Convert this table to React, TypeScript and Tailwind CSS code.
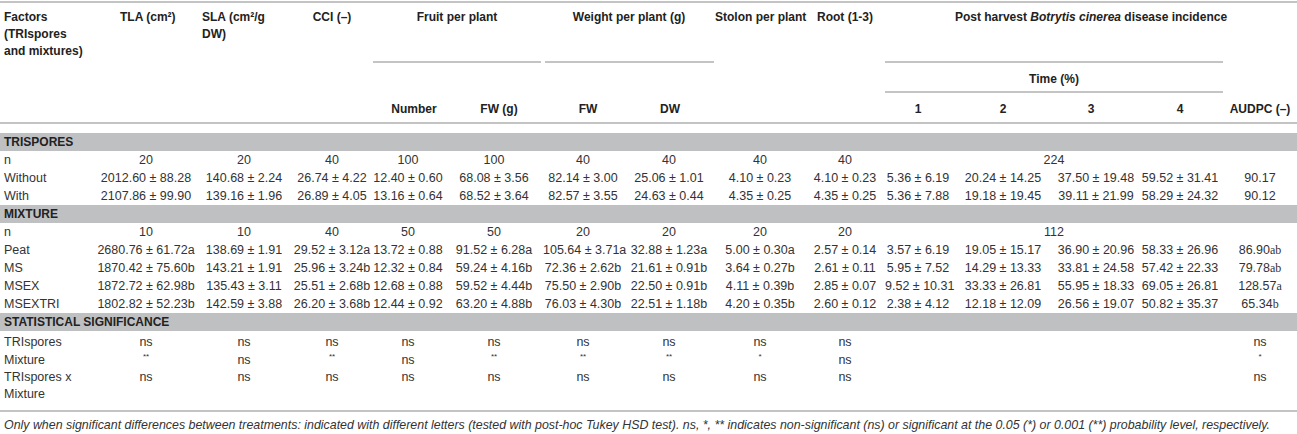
import React from "react";

const GRID =
  "grid grid-cols-[97px_98px_98px_78px_74px_98px_80px_92px_90px_80px_66px_104px_82px_86px_74px]";

function Band({ children }: { children: React.ReactNode }) {
  return (
    <div className="h-[18px] bg-[#bfc0c2] pl-[4px] text-[12px] font-bold leading-[18px] text-[#222]">
      {children}
    </div>
  );
}

function NRow({ vals, time }: { vals: string[]; time: string }) {
  return (
    <div className={`${GRID} h-[18px] leading-[18px]`}>
      <div className="pl-[4px]">n</div>
      {vals.map((v, i) => (
        <div key={i} className="text-center">
          {v}
        </div>
      ))}
      <div className="col-span-4 text-center">{time}</div>
      <div></div>
    </div>
  );
}

function DataRow({
  label,
  cells,
  audpc,
  letters,
}: {
  label: string;
  cells: string[];
  audpc: string;
  letters?: string;
}) {
  return (
    <div className={`${GRID} h-[18px] leading-[18px]`}>
      <div className="pl-[4px]">{label}</div>
      {cells.map((c, i) => (
        <div key={i} className="whitespace-nowrap text-center">
          {c}
        </div>
      ))}
      <div className="whitespace-nowrap text-center">
        {audpc}
        {letters ? <span className="font-['Liberation_Serif',serif] text-[12px]">{letters}</span> : null}
      </div>
    </div>
  );
}

function Star({ n }: { n: number }) {
  return <span className="align-super text-[8px] leading-none">{n === 2 ? "**" : "*"}</span>;
}

function StatRow({
  label,
  cells,
  audpc,
  tall,
}: {
  label: React.ReactNode;
  cells: React.ReactNode[];
  audpc: React.ReactNode;
  tall?: boolean;
}) {
  return (
    <div className={`${GRID} ${tall ? "h-[34px] leading-[17px]" : "h-[18px] leading-[18px]"}`}>
      <div className="pl-[4px]">{label}</div>
      {cells.map((c, i) => (
        <div key={i} className="text-center">
          {c}
        </div>
      ))}
      <div className="col-span-4"></div>
      <div className="text-center">{audpc}</div>
    </div>
  );
}

export default function App() {
  const ns9 = Array.from({ length: 9 }, () => "ns");
  return (
    <div className="w-[1297px] bg-white pt-[1px] font-['Liberation_Sans',Arial,sans-serif] text-[12.5px] text-[#333]">
      <div className="h-[2px] bg-[#c4c4c4]"></div>

      {/* header */}
      <div className={`${GRID} grid-rows-[58px_32px_29px] text-[12px] font-bold leading-[17px] text-[#222]`}>
        <div className="col-start-1 row-start-1 row-span-3 pl-[4px] pt-[6px]">
          Factors
          <br />
          (TRIspores
          <br />
          and mixtures)
        </div>
        <div className="col-start-2 row-start-1 row-span-3 pl-[23px] pt-[6px]">TLA (cm²)</div>
        <div className="col-start-3 row-start-1 row-span-3 pl-[7px] pt-[6px]">
          SLA (cm²/g
          <br />
          DW)
        </div>
        <div className="col-start-4 row-start-1 row-span-3 pt-[6px] text-center">CCI (–)</div>
        <div className="col-start-5 col-span-2 row-start-1 pt-[6px] text-center">Fruit per plant</div>
        <div className="col-start-7 col-span-2 row-start-1 pt-[6px] text-center">Weight per plant (g)</div>
        <div className="col-start-9 row-start-1 row-span-3 whitespace-nowrap pt-[6px] text-center">
          Stolon per plant
        </div>
        <div className="col-start-10 row-start-1 row-span-3 pt-[6px] text-center">Root (1-3)</div>
        <div className="col-start-11 col-span-5 row-start-1 pt-[6px] text-center">
          Post harvest <i>Botrytis cinerea</i> disease incidence
        </div>

        <div className="col-start-5 col-span-2 row-start-2 mx-[2px] border-t-2 border-[#c4c4c4]"></div>
        <div className="col-start-7 col-span-2 row-start-2 ml-[2px] mr-[1px] border-t-2 border-[#c4c4c4]"></div>
        <div className="col-start-11 col-span-4 row-start-2 border-y-2 border-[#c4c4c4] pt-[8px] text-center">
          Time (%)
        </div>

        <div className="col-start-5 row-start-3 pl-[12px] pt-[8px] text-center">Number</div>
        <div className="col-start-6 row-start-3 pl-[10px] pt-[8px] text-center">FW (g)</div>
        <div className="col-start-7 row-start-3 pl-[10px] pt-[8px] text-center">FW</div>
        <div className="col-start-8 row-start-3 pl-[2px] pt-[8px] text-center">DW</div>
        <div className="col-start-11 row-start-3 pt-[8px] text-center">1</div>
        <div className="col-start-12 row-start-3 pt-[8px] text-center">2</div>
        <div className="col-start-13 row-start-3 pr-[10px] pt-[8px] text-center">3</div>
        <div className="col-start-14 row-start-3 pt-[8px] text-center">4</div>
        <div className="col-start-15 row-start-3 whitespace-nowrap pt-[8px] text-center">AUDPC (–)</div>
      </div>
      <div className="h-[2px] bg-[#c4c4c4]"></div>

      <div className="mt-[9px]">
        <Band>TRISPORES</Band>
        <NRow vals={["20", "20", "40", "100", "100", "40", "40", "40", "40"]} time="224" />
        <DataRow
          label="Without"
          cells={[
            "2012.60 ± 88.28",
            "140.68 ± 2.24",
            "26.74 ± 4.22",
            "12.40 ± 0.60",
            "68.08 ± 3.56",
            "82.14 ± 3.00",
            "25.06 ± 1.01",
            "4.10 ± 0.23",
            "4.10 ± 0.23",
            "5.36 ± 6.19",
            "20.24 ± 14.25",
            "37.50 ± 19.48",
            "59.52 ± 31.41",
          ]}
          audpc="90.17"
        />
        <DataRow
          label="With"
          cells={[
            "2107.86 ± 99.90",
            "139.16 ± 1.96",
            "26.89 ± 4.05",
            "13.16 ± 0.64",
            "68.52 ± 3.64",
            "82.57 ± 3.55",
            "24.63 ± 0.44",
            "4.35 ± 0.25",
            "4.35 ± 0.25",
            "5.36 ± 7.88",
            "19.18 ± 19.45",
            "39.11 ± 21.99",
            "58.29 ± 24.32",
          ]}
          audpc="90.12"
        />

        <Band>MIXTURE</Band>
        <NRow vals={["10", "10", "40", "50", "50", "20", "20", "20", "20"]} time="112" />
        <DataRow
          label="Peat"
          cells={[
            "2680.76 ± 61.72a",
            "138.69 ± 1.91",
            "29.52 ± 3.12a",
            "13.72 ± 0.88",
            "91.52 ± 6.28a",
            "105.64 ± 3.71a",
            "32.88 ± 1.23a",
            "5.00 ± 0.30a",
            "2.57 ± 0.14",
            "3.57 ± 6.19",
            "19.05 ± 15.17",
            "36.90 ± 20.96",
            "58.33 ± 26.96",
          ]}
          audpc="86.90"
          letters="ab"
        />
        <DataRow
          label="MS"
          cells={[
            "1870.42 ± 75.60b",
            "143.21 ± 1.91",
            "25.96 ± 3.24b",
            "12.32 ± 0.84",
            "59.24 ± 4.16b",
            "72.36 ± 2.62b",
            "21.61 ± 0.91b",
            "3.64 ± 0.27b",
            "2.61 ± 0.11",
            "5.95 ± 7.52",
            "14.29 ± 13.33",
            "33.81 ± 24.58",
            "57.42 ± 22.33",
          ]}
          audpc="79.78"
          letters="ab"
        />
        <DataRow
          label="MSEX"
          cells={[
            "1872.72 ± 62.98b",
            "135.43 ± 3.11",
            "25.51 ± 2.68b",
            "12.68 ± 0.88",
            "59.52 ± 4.44b",
            "75.50 ± 2.90b",
            "22.50 ± 0.91b",
            "4.11 ± 0.39b",
            "2.85 ± 0.07",
            "9.52 ± 10.31",
            "33.33 ± 26.81",
            "55.95 ± 18.33",
            "69.05 ± 26.81",
          ]}
          audpc="128.57"
          letters="a"
        />
        <DataRow
          label="MSEXTRI"
          cells={[
            "1802.82 ± 52.23b",
            "142.59 ± 3.88",
            "26.20 ± 3.68b",
            "12.44 ± 0.92",
            "63.20 ± 4.88b",
            "76.03 ± 4.30b",
            "22.51 ± 1.18b",
            "4.20 ± 0.35b",
            "2.60 ± 0.12",
            "2.38 ± 4.12",
            "12.18 ± 12.09",
            "26.56 ± 19.07",
            "50.82 ± 35.37",
          ]}
          audpc="65.34"
          letters="b"
        />

        <Band>STATISTICAL SIGNIFICANCE</Band>
        <div className="pt-[2px]">
          <StatRow label="TRIspores" cells={ns9} audpc="ns" />
          <StatRow
            label="Mixture"
            cells={[
              <Star n={2} />,
              "ns",
              <Star n={2} />,
              "ns",
              <Star n={2} />,
              <Star n={2} />,
              <Star n={2} />,
              <Star n={1} />,
              "ns",
            ]}
            audpc={<Star n={1} />}
          />
          <StatRow
            label={
              <>
                TRIspores x
                <br />
                Mixture
              </>
            }
            cells={ns9}
            audpc="ns"
            tall
          />
        </div>
      </div>

      <div className="mt-[7px] h-[2px] bg-[#c4c4c4]"></div>
      <div className="mt-[5px] whitespace-nowrap pl-[4px] text-[12.4px] italic leading-[17px] text-[#333]">
        Only when significant differences between treatments: indicated with different letters (tested with post-hoc
        Tukey HSD test). ns, *, ** indicates non-significant (ns) or significant at the 0.05 (*) or 0.001 (**)
        probability level, respectively.
      </div>
    </div>
  );
}
